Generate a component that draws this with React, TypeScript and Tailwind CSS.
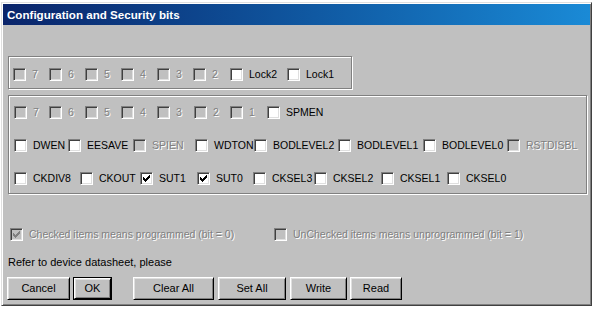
import React from 'react';

type Bit = { label: string; w: number; on?: boolean; disabled?: boolean };

const lockBits: Bit[] = [
  { label: '7', w: 36, disabled: true },
  { label: '6', w: 36, disabled: true },
  { label: '5', w: 36, disabled: true },
  { label: '4', w: 36, disabled: true },
  { label: '3', w: 36, disabled: true },
  { label: '2', w: 37, disabled: true },
  { label: 'Lock2', w: 57 },
  { label: 'Lock1', w: 56 },
];

const fuseRows: Bit[][] = [
  [
    { label: '7', w: 35, disabled: true },
    { label: '6', w: 36, disabled: true },
    { label: '5', w: 36, disabled: true },
    { label: '4', w: 36, disabled: true },
    { label: '3', w: 37, disabled: true },
    { label: '2', w: 36, disabled: true },
    { label: '1', w: 37, disabled: true },
    { label: 'SPMEN', w: 60 },
  ],
  [
    { label: 'DWEN', w: 54 },
    { label: 'EESAVE', w: 65 },
    { label: 'SPIEN', w: 62, disabled: true },
    { label: 'WDTON', w: 59 },
    { label: 'BODLEVEL2', w: 84 },
    { label: 'BODLEVEL1', w: 85 },
    { label: 'BODLEVEL0', w: 84 },
    { label: 'RSTDISBL', w: 72, disabled: true },
  ],
  [
    { label: 'CKDIV8', w: 66 },
    { label: 'CKOUT', w: 60 },
    { label: 'SUT1', w: 57, on: true },
    { label: 'SUT0', w: 56, on: true },
    { label: 'CKSEL3', w: 61 },
    { label: 'CKSEL2', w: 67 },
    { label: 'CKSEL1', w: 66 },
    { label: 'CKSEL0', w: 70 },
  ],
];

// classic 7x7 check glyph, one 3px column per x
const checkCols = [2, 3, 4, 3, 2, 1, 0];

function Box({ on, disabled }: { on?: boolean; disabled?: boolean }) {
  return (
    <span
      className={`relative block h-[13px] w-[13px] shrink-0 border border-t-[#808080] border-l-[#808080] border-r-white border-b-white shadow-[inset_1px_1px_#404040,inset_-1px_-1px_#dfdfdf] ${
        disabled ? 'bg-[#c0c0c0]' : 'bg-white'
      }`}
    >
      {on && (
        <svg className="absolute left-[2px] top-[2px]" width="7" height="7" shapeRendering="crispEdges">
          {checkCols.map((y, x) => (
            <rect key={x} x={x} y={y} width="1" height="3" fill={disabled ? '#808080' : '#000'} />
          ))}
        </svg>
      )}
    </span>
  );
}

function Check({ bit }: { bit: Bit }) {
  return (
    <div className="flex h-[13px] shrink-0 items-center overflow-hidden" style={{ width: bit.w }}>
      <Box on={bit.on} disabled={bit.disabled} />
      <span
        className={`ml-[6px] whitespace-nowrap text-[10.5px] leading-[13px] ${
          bit.disabled ? 'text-[#808080] [text-shadow:1px_1px_0_#fff]' : 'text-black'
        }`}
      >
        {bit.label}
      </span>
    </div>
  );
}

function Button({ label, w, isDefault }: { label: string; w: number; isDefault?: boolean }) {
  return (
    <div className={`h-[23px] shrink-0 ${isDefault ? 'border border-black' : ''}`} style={{ width: w }}>
      <div className="flex h-full w-full items-center justify-center border border-t-white border-l-white border-r-black border-b-black bg-[#c0c0c0] text-[11px] text-black shadow-[inset_1px_1px_#dfdfdf,inset_-1px_-1px_#808080]">
        {label}
      </div>
    </div>
  );
}

const groupCls = 'border border-[#808080] shadow-[1px_1px_0_#fff,inset_1px_1px_0_#fff]';

export default function App() {
  return (
    <div className="h-[309px] w-[595px] bg-white pl-[1px] pt-[2px] font-['Liberation_Sans',Arial,sans-serif]">
      <div className="flex h-[304px] w-[591px] flex-col border border-t-[#dfdfdf] border-l-[#dfdfdf] border-r-[#404040] border-b-[#404040] bg-[#c0c0c0] p-[1px] shadow-[inset_1px_1px_#fff,inset_-1px_-1px_#808080]">
        <div className="flex h-[21px] shrink-0 items-center bg-gradient-to-r from-[#0a246a] to-[#1a8ad6] pl-[4px]">
          <span className="text-[11.6px] font-bold text-white">Configuration and Security bits</span>
        </div>

        <div className="flex flex-col pl-[5px]">
          <div className={`mt-[31px] w-[344px] pb-[7px] pl-[4px] pt-[11px] ${groupCls}`}>
            <div className="flex">
              {lockBits.map((b) => (
                <Check key={b.label} bit={b} />
              ))}
            </div>
          </div>

          <div className={`mt-[6px] flex w-[579px] flex-col gap-[20px] pb-[8px] pl-[5px] pt-[10px] ${groupCls}`}>
            {fuseRows.map((row, i) => (
              <div key={i} className="flex">
                {row.map((b) => (
                  <Check key={b.label} bit={b} />
                ))}
              </div>
            ))}
          </div>

          <div className="ml-[2px] mt-[34px] flex">
            <Check bit={{ label: 'Checked items means programmed (bit = 0)', w: 264, on: true, disabled: true }} />
            <Check bit={{ label: 'UnChecked items means unprogrammed (bit = 1)', w: 290, disabled: true }} />
          </div>

          <div className="mt-[15px] h-[13px] text-[11px] leading-[13px] text-black">Refer to device datasheet, please</div>

          <div className="-ml-[1px] mt-[8px] flex">
            <Button label="Cancel" w={63} />
            <div className="ml-[3px]">
              <Button label="OK" w={39} isDefault />
            </div>
            <div className="ml-[21px]">
              <Button label="Clear All" w={81} />
            </div>
            <div className="ml-[4px]">
              <Button label="Set All" w={68} />
            </div>
            <div className="ml-[4px]">
              <Button label="Write" w={57} />
            </div>
            <div className="ml-[3px]">
              <Button label="Read" w={52} />
            </div>
          </div>
        </div>
      </div>
    </div>
  );
}
